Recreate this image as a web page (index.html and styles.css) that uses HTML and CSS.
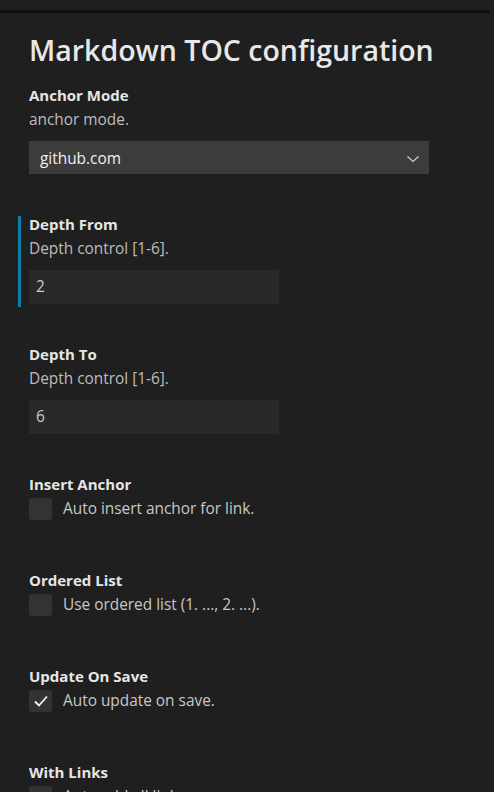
FILE: index.html
```html
<!DOCTYPE html>
<html lang="en">
<head>
<meta charset="utf-8">
<title>Markdown TOC configuration</title>
<link rel="stylesheet" href="styles.css">
</head>
<body>
<div class="scroll-shadow"></div>
<main class="page">
  <h1 class="title">Markdown TOC configuration</h1>
  <div class="settings">
    <section class="setting">
      <div class="label">Anchor Mode</div>
      <div class="desc">anchor mode.</div>
      <div class="select">
        <span>github.com</span>
        <svg class="chevron" width="14" height="10" viewBox="0 0 14 10"><path d="M1.5 2.5 L7 7.5 L12.5 2.5" fill="none" stroke="#cfcfcf" stroke-width="1.2"/></svg>
      </div>
    </section>
    <section class="setting focused">
      <div class="label">Depth From</div>
      <div class="desc">Depth control [1-6].</div>
      <div class="input">2</div>
    </section>
    <section class="setting">
      <div class="label">Depth To</div>
      <div class="desc">Depth control [1-6].</div>
      <div class="input">6</div>
    </section>
    <section class="setting check-setting">
      <div class="label">Insert Anchor</div>
      <div class="check-row"><span class="checkbox"></span><span class="check-text">Auto insert anchor for link.</span></div>
    </section>
    <section class="setting check-setting">
      <div class="label">Ordered List</div>
      <div class="check-row"><span class="checkbox"></span><span class="check-text">Use ordered list (1. ..., 2. ...).</span></div>
    </section>
    <section class="setting check-setting">
      <div class="label">Update On Save</div>
      <div class="check-row"><span class="checkbox"><svg width="22" height="22" viewBox="0 0 22 22"><path d="M5 11.5 L9 15.5 L17 6.5" fill="none" stroke="#f2f2f2" stroke-width="1.8"/></svg></span><span class="check-text">Auto update on save.</span></div>
    </section>
    <section class="setting check-setting">
      <div class="label">With Links</div>
      <div class="check-row"><span class="checkbox"><svg width="22" height="22" viewBox="0 0 22 22"><path d="M5 11.5 L9 15.5 L17 6.5" fill="none" stroke="#f2f2f2" stroke-width="1.8"/></svg></span><span class="check-text">Auto add all links.</span></div>
    </section>
  </div>
</main>
</body>
</html>
```
FILE: styles.css
```css
html, body {
  margin: 0;
  padding: 0;
  background: #1f1f1f;
  overflow: hidden;
}
body {
  font-family: "Open Sans", "Noto Sans", sans-serif;
  color: #e6e6e6;
  height: 792px;
}
.scroll-shadow {
  margin-top: 10px;
  width: 490px;
  height: 3px;
  background: #0f0f0f;
}
.page {
  padding-left: 18px;
}
.title {
  margin: 17px 0 0 11px;
  font-size: 28.5px;
  line-height: 40px;
  font-weight: 600;
  color: #e8e8e8;
}
.settings {
  margin-top: 17px;
  display: flex;
  flex-direction: column;
  gap: 39px;
}
.setting {
  border-left: 3px solid transparent;
  padding: 0 0 3px 8px;
}
.setting.focused {
  border-left-color: #0c7fa8;
}
.check-setting {
  padding-bottom: 13px;
}
.label {
  font-size: 15px;
  line-height: 16px;
  font-weight: 700;
  color: #e6e6e6;
}
.desc {
  margin-top: 7px;
  font-size: 15.4px;
  line-height: 20px;
  color: #bdbdbd;
}
.select {
  margin-top: 11px;
  width: 400px;
  height: 33px;
  box-sizing: border-box;
  padding: 2px 9px 0 11px;
  background: #3c3c3c;
  display: flex;
  align-items: center;
  justify-content: space-between;
  font-size: 15.4px;
  line-height: 20px;
  color: #f0f0f0;
}
.chevron {
  display: block;
}
.input {
  margin-top: 11px;
  width: 250px;
  height: 34px;
  box-sizing: border-box;
  padding: 0 7px;
  background: #292929;
  display: flex;
  align-items: center;
  font-size: 15.4px;
  line-height: 20px;
  color: #cccccc;
}
.check-row {
  margin-top: 6px;
  display: flex;
  align-items: center;
  gap: 11px;
  height: 22px;
}
.checkbox {
  width: 23px;
  height: 22px;
  border-radius: 3px;
  background: #333333;
  display: flex;
  align-items: center;
  justify-content: center;
}
.checkbox svg {
  display: block;
}
.check-text {
  font-size: 15.4px;
  line-height: 20px;
  color: #c8c8c8;
}
```
